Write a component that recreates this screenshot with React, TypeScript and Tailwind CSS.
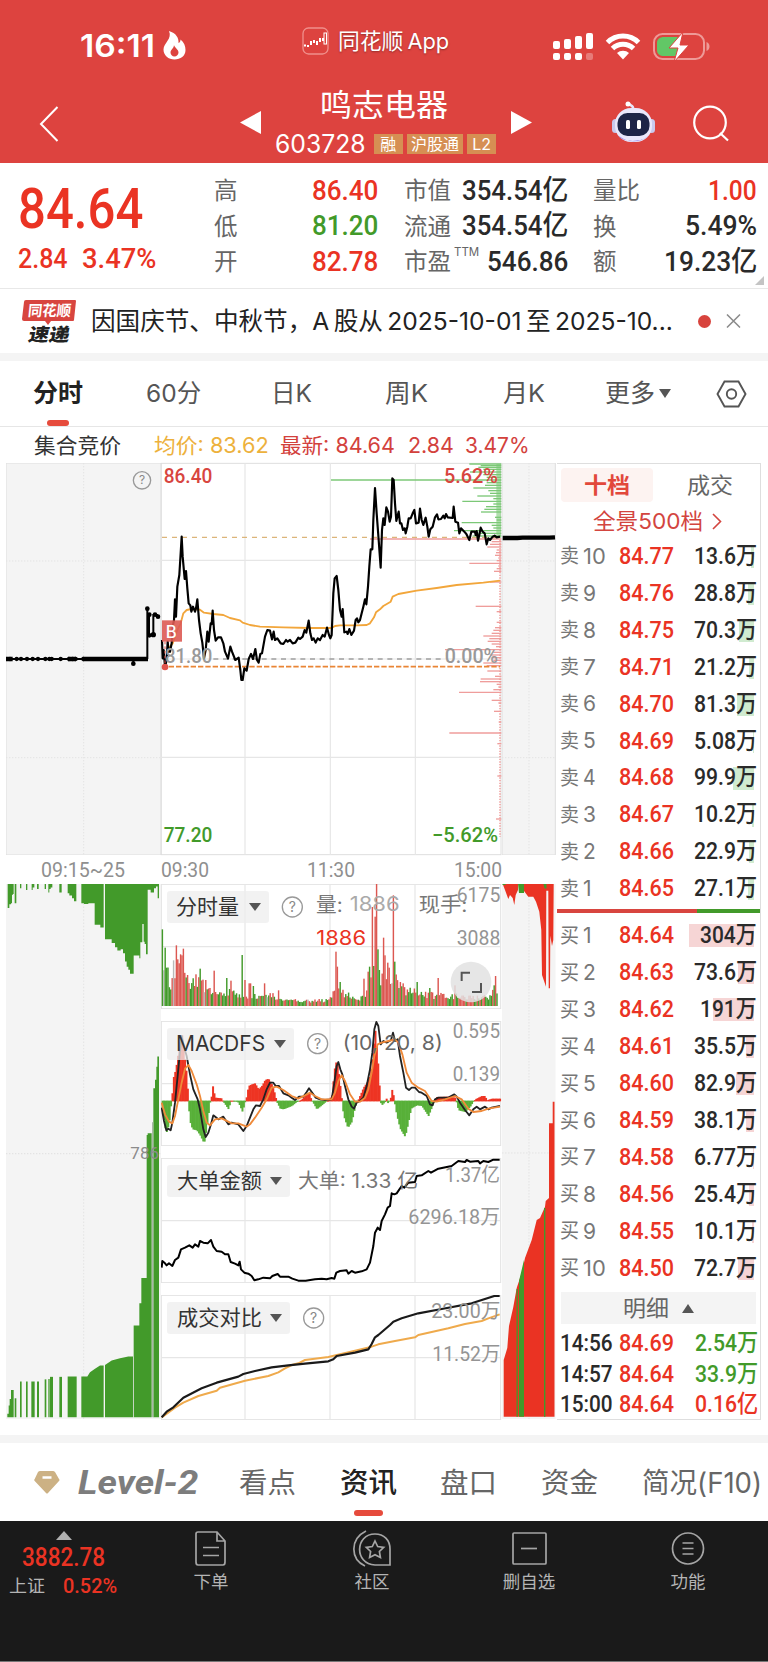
import { useLayoutEffect, useRef, useState, type ReactNode } from "react";

/* Text squeezed or stretched horizontally so that it fills the width of its box. */
function Fit({ className = "", children }: { className?: string; children: ReactNode }) {
  const box = useRef<HTMLSpanElement>(null);
  const inner = useRef<HTMLSpanElement>(null);
  const [scale, setScale] = useState(1);
  useLayoutEffect(() => {
    if (box.current && inner.current && inner.current.offsetWidth > 0) {
      setScale(box.current.clientWidth / inner.current.offsetWidth);
    }
  }, [children]);
  return (
    <span ref={box} className={"block shrink-0 whitespace-nowrap " + className}>
      <span ref={inner} className="inline-block origin-left" style={{ transform: `scaleX(${scale})` }}>
        {children}
      </span>
    </span>
  );
}

type Pt = [number, number];
const parse = (s: string): Pt[] => s.trim().split(/\s+/).map((p) => p.split(",").map(Number) as Pt);
const at = (pts: Pt[], x: number) => {
  for (let i = 1; i < pts.length; i++) {
    if (x <= pts[i][0]) {
      const [x0, y0] = pts[i - 1];
      const [x1, y1] = pts[i];
      return y0 + ((y1 - y0) * (x - x0)) / (x1 - x0 || 1);
    }
  }
  return pts[pts.length - 1][1];
};
const noise = (i: number) => {
  const v = Math.sin(i * 127.1 + 11.7) * 43758.5453;
  return v - Math.floor(v);
};

/* Chart data, in thirds of a pixel */
const PRICE =
  "36,540 38,595 41,570 45,620 50,600 53,545 56,575 60,575 65,550 68,500 72,480 75,418 78,470 82,380 88,345 92,280 95,230 98,290 104,357 108,333 112,385 116,430 121,436 124,455 129,440 135,455 138,445 142,418 147,480 152,520 157,548 162,595 167,570 172,515 176,545 182,490 185,492 188,452 192,510 197,542 204,532 213,532 220,550 225,575 234,596 241,560 246,575 256,600 266,593 271,630 274,660 278,660 283,625 290,632 296,597 303,582 309,597 316,567 321,600 326,608 331,582 336,580 345,530 352,510 360,512 366,538 371,515 375,540 382,535 392,550 400,552 408,540 413,545 420,540 428,550 436,548 445,533 450,537 458,530 464,510 469,518 476,482 481,520 486,540 491,535 497,548 503,535 510,540 518,525 524,530 531,503 537,525 541,535 545,525 550,400 554,355 560,348 565,390 570,450 575,470 578,447 583,517 590,515 593,522 598,507 604,525 612,512 617,480 621,475 625,487 630,480 635,460 640,440 645,418 649,433 654,380 658,320 662,268 667,268 670,180 675,84 680,160 686,240 692,323 696,210 700,175 704,195 709,142 714,155 719,185 723,170 727,55 731,60 735,130 739,183 742,170 746,155 750,190 754,190 759,210 764,205 767,220 772,200 776,175 782,175 788,160 793,150 798,190 806,188 810,146 815,180 820,195 827,173 832,200 836,230 841,208 848,200 855,172 861,163 865,178 873,177 880,167 884,175 888,162 893,172 908,174 911,140 916,185 924,188 928,220 933,205 943,215 949,222 958,240 964,215 975,215 977,225 980,213 984,242 988,225 992,203 998,215 1004,220 1010,253 1015,235 1020,240 1028,230 1034,227 1040,232 1050,230";
const AVERAGE =
  "48,575 68,550 80,515 92,490 100,460 110,450 125,447 150,449 162,458 190,462 220,465 240,474 270,481 278,488 300,495 330,500 400,502 480,504 545,504 555,498 570,496 620,496 650,495 660,490 672,472 678,457 690,448 700,438 722,425 728,410 745,402 800,392 860,384 920,375 1000,368 1050,362";
const ASKS = parse(
  "12,958 17,992 22,985 28,1000 36,960 44,1000 52,1010 60,543 68,1010 76,1005 84,970 92,1015 100,1020 108,982 116,1030 124,937 132,1030 140,1008 148,1003 156,993 172,1035 180,1040 188,935 196,1025 204,1030 212,912 220,985 228,968"
);
const BIDS = parse(
  "237,660 245,1025 253,1020 261,1012 270,1040 278,1038 286,1035 294,1045 302,1040 310,958 318,1045 326,1040 334,1032 366,1020 439,977 455,1040 487,1040 503,1035 511,1030 520,1025 528,1000 536,1018 544,1013 552,1025 560,1038 569,885 577,1030 585,1020 593,1025 601,1030 609,1000 617,1010 633,1012 649,1035 657,992 665,990 673,1040 681,1045 689,1030 697,927 721,1025 729,1045 754,1032 786,1046 819,898 851,1042 948,1042 1077,1038"
);
const VOLUME_SHAPE = parse(
  "20,100 28,130 36,110 45,60 55,110 65,130 80,150 90,130 100,85 130,90 150,60 180,50 220,50 260,38 300,38 350,38 380,20 450,18 520,20 532,45 540,110 550,80 560,45 610,28 625,35 635,60 645,110 655,120 672,100 700,90 725,90 740,55 780,48 830,38 900,34 960,30 1000,30 1020,60 1030,60"
);
const VOLUME_PEAKS: [number, number, string][] = [
  [24, 230, "g"], [32, 175, "g"], [36, 115, "g"], [57, 137, "r"], [62, 182, "r"], [70, 140, "r"], [75, 155, "r"], [79, 152, "r"], [83, 172, "r"], [87, 143, "g"],
  [135, 112, "g"], [151, 78, "r"], [176, 106, "r"], [215, 84, "g"], [228, 76, "r"], [261, 153, "g"], [269, 78, "r"], [284, 68, "r"], [288, 68, "r"], [296, 60, "g"], [328, 68, "r"],
  [370, 47, "r"], [541, 163, "r"], [545, 118, "r"], [549, 85, "r"], [556, 72, "g"], [628, 82, "r"], [641, 103, "r"], [645, 118, "g"], [650, 297, "r"],
  [655, 120, "g"], [659, 268, "r"], [663, 366, "r"], [667, 170, "g"], [672, 108, "g"], [684, 205, "r"], [688, 152, "r"], [697, 130, "r"],
  [701, 115, "r"], [714, 332, "r"], [718, 133, "g"], [735, 72, "r"], [743, 68, "r"], [785, 72, "g"], [823, 54, "g"], [850, 84, "r"], [900, 62, "r"], [1018, 62, "g"], [1022, 90, "r"],
];
const HISTOGRAM = parse(
  "20,700 28,770 34,792 42,765 48,705 50,690 55,625 62,600 68,560 75,530 80,490 85,540 92,590 97,640 99,700 105,760 112,782 125,785 135,800 147,825 155,775 165,700 168,690 173,650 180,685 200,687 205,700 212,710 220,722 228,695 240,697 250,702 262,730 270,700 275,680 280,650 290,645 300,642 310,660 320,650 330,632 340,628 350,645 360,675 365,700 375,720 385,722 410,712 425,700 440,690 455,675 462,670 470,695 485,722 500,710 515,697 530,680 538,600 545,570 552,620 560,690 565,740 578,778 590,760 600,715 610,690 625,655 635,640 645,620 652,570 660,480 668,570 675,680 678,712 690,700 693,680 697,712 700,690 704,700 712,655 718,700 725,740 735,780 750,805 758,770 768,720 785,710 800,712 820,742 835,705 845,683 880,682 900,685 910,725 930,730 945,715 960,690 980,680 990,680 995,693 1010,688 1035,688"
);
const DIF =
  "20,715 27,755 34,783 40,778 47,783 52,760 60,700 68,620 75,545 80,500 86,530 95,560 105,615 115,660 128,690 135,720 145,780 152,803 160,790 168,765 175,738 190,750 205,742 220,765 230,760 250,765 265,785 275,770 285,745 295,720 303,708 315,710 325,690 335,660 345,640 355,640 362,650 372,650 385,672 400,678 410,685 420,692 432,682 445,682 455,668 462,657 475,675 482,685 495,690 510,692 530,690 538,640 545,590 550,578 556,600 562,615 570,650 580,690 590,712 597,718 605,700 615,695 625,685 635,650 645,600 652,550 658,480 664,458 670,470 677,525 685,515 695,520 708,512 714,490 720,515 728,510 735,560 745,610 753,655 762,662 770,655 780,655 792,668 800,670 815,680 825,705 832,708 840,690 850,685 880,685 898,675 905,682 915,700 930,722 943,738 955,720 965,712 975,720 990,712 1000,720 1010,715 1035,710";
const DEA =
  "20,700 30,735 42,757 52,762 60,740 68,700 80,640 90,598 100,587 110,605 125,645 135,680 145,725 155,760 165,768 180,750 200,747 230,762 250,762 275,772 285,765 300,745 320,715 335,690 350,655 365,652 385,662 410,680 430,688 450,678 465,670 480,680 500,690 530,690 540,670 550,635 560,618 570,635 585,675 600,697 615,697 630,685 640,660 650,610 658,560 668,525 680,520 700,515 720,510 730,520 742,555 755,610 770,640 790,655 810,665 830,695 845,697 870,690 900,680 920,690 940,718 955,728 980,725 1000,718 1035,712";
const BIG_ORDERS =
  "20,385 22,365 30,372 35,378 42,372 52,380 60,362 70,355 78,330 90,325 103,318 113,325 120,315 130,322 135,305 145,310 158,312 168,302 175,322 185,335 200,337 210,345 220,345 227,368 240,373 250,378 254,367 258,390 268,400 280,403 290,410 298,423 310,420 325,415 345,417 352,410 368,404 375,412 400,412 412,418 430,424 452,424 480,420 500,418 515,420 530,416 538,418 544,400 555,395 575,393 580,403 590,395 600,400 620,396 635,390 645,370 655,320 660,280 668,265 675,272 680,245 690,225 698,205 705,200 710,162 718,165 725,162 740,140 748,145 760,130 780,128 785,110 800,108 820,95 828,100 850,88 890,80 910,65 930,68 935,62 945,67 970,65 975,72 985,65 1000,68 1015,61 1034,61";
const TODAY =
  "20,832 35,815 55,802 85,773 140,745 185,728 250,710 265,702 300,693 350,682 400,676 450,671 520,664 535,658 545,648 600,638 640,628 650,612 660,592 670,585 705,555 715,545 740,535 790,520 860,507 950,490 1018,468 1034,468";
const YESTERDAY =
  "20,832 60,803 85,788 130,768 185,752 195,743 270,722 340,708 370,697 390,685 410,675 430,670 450,660 520,651 600,632 650,620 670,613 720,603 780,592 790,585 880,565 930,552 980,543 1000,535 1034,523";

const SELLS: [number, string, string, number][] = [
  [10, "84.77", "13.6万", 3], [9, "84.76", "28.8万", 6], [8, "84.75", "70.3万", 15], [7, "84.71", "21.2万", 5], [6, "84.70", "81.3万", 17],
  [5, "84.69", "5.08万", 1], [4, "84.68", "99.9万", 21], [3, "84.67", "10.2万", 2], [2, "84.66", "22.9万", 5], [1, "84.65", "27.1万", 6],
];
const BUYS: [number, string, string, number][] = [
  [1, "84.64", "304万", 65], [2, "84.63", "73.6万", 16], [3, "84.62", "191万", 41], [4, "84.61", "35.5万", 8], [5, "84.60", "82.9万", 18],
  [6, "84.59", "38.1万", 8], [7, "84.58", "6.77万", 1], [8, "84.56", "25.4万", 5], [9, "84.55", "10.1万", 2], [10, "84.50", "72.7万", 16],
];
const NUM = "font-['Roboto','Noto_Sans_CJK_SC',sans-serif] font-medium";

function StatusBar() {
  return (
    <div className="flex h-[86px] items-center pl-[80px]">
      <Fit className="w-[75px] text-[31px] font-semibold leading-[40px] mt-[6px]">16:11</Fit>
      <svg className="ml-[8px] mt-[5px]" width="23" height="29" viewBox="0 0 23 29" fill="none">
        <path d="M6 0c7 2 10 7 9.500 12 1.500-.5 2-2 2-3.500 3.500 2.500 5 6.500 5 10.500 0 6-5 9.500-11 9.500S.5 24.500.5 18.500C.5 12 9.500 8 6 0z" fill="#fff" />
        <path d="M10.500 12.500c2 4-3 5.500-3 9 0 2.300 1.800 4 4 4s4-1.700 4-4c0-3.500-4-4-5-9z" fill="#dd433f" />
      </svg>
      <svg className="ml-[116px] -mt-[5px]" width="27" height="28" viewBox="0 0 27 28" fill="none">
        <rect x="1" y="1" width="25" height="26" rx="5.500" stroke="#f0908c" strokeWidth="1.300" />
        <path d="M2 18.500h2M6 18v2M9 14v4M12 13v3M15 14v4M18 11v4M21 11v3" stroke="#fff" strokeWidth="2" />
        <rect x="22" y="6" width="2.500" height="11" stroke="#fff" strokeWidth="1" />
      </svg>
      <Fit className="ml-[9px] -mt-[4px] w-[111px] text-[22px] leading-[32px] [text-shadow:0_1px_2px_rgba(0,0,0,.35)]">同花顺{"\u2009"}App</Fit>
      <svg className="ml-[103px] mt-[5px]" width="160" height="28" viewBox="552 31 160 28" fill="none">
        <g fill="#fff">
          <rect x="553" y="40" width="7" height="8" rx="2" /><rect x="564" y="38" width="7" height="10" rx="2" />
          <rect x="575" y="35" width="7" height="13" rx="2" /><rect x="586" y="32" width="7" height="16" rx="2" />
          <rect x="553" y="52" width="7" height="7" rx="2" /><rect x="564" y="52" width="7" height="7" rx="2" /><rect x="575" y="52" width="7" height="7" rx="2" />
          <rect x="586" y="52" width="7" height="7" rx="2" opacity=".3" />
          <path d="M617 52a9 9 0 0 1 12 0l-6 6.500z" />
        </g>
        <path d="M607.500 41.500a22 22 0 0 1 31 0M612.500 47.500a15 15 0 0 1 21 0" stroke="#fff" strokeWidth="5" />
        <rect x="654" y="33" width="50" height="25" rx="8.500" stroke="#ee9a97" strokeWidth="2" />
        <path d="M664 36h14l-5 10h5l-2 9h-12c-4 0-7-2-7-6v-7c0-4 3-6 7-6z" fill="#62c766" />
        <path d="M706.500 41c4 1 4 8 0 9z" fill="#ee9a97" />
        <path d="M683 31l-14 16h9l-4 14 15-17h-9z" fill="#fff" stroke="#dd433f" strokeWidth="1" />
      </svg>
    </div>
  );
}

function TitleBar() {
  return (
    <div className="flex h-[77px] items-start">
      <svg className="ml-[39px] mt-[20px]" width="20" height="36" viewBox="0 0 20 36" fill="none"><path d="M18.500 1L2 18l16.500 17" stroke="#fff" strokeWidth="2" /></svg>
      <svg className="ml-[181px] mt-[25px]" width="21" height="23" viewBox="0 0 21 23"><path d="M21 0v23L0 11.500z" fill="#fff" /></svg>
      <div className="ml-[14px] flex w-[221px] flex-col items-center">
        <Fit className="-mt-px mr-[4px] w-[128px] text-[31px] leading-[40px]">鸣志电器</Fit>
        <div className="mt-[6px] flex w-full items-center gap-[4px]">
          <Fit className="mr-[4px] w-[91px] text-[25px] leading-[26px]">603728</Fit>
          <span className="flex h-[20px] w-[29px] items-center justify-center bg-[#d68f53] text-[16px]">融</span>
          <span className="flex h-[20px] w-[57px] items-center justify-center bg-[#d68f53] text-[16px]">沪股通</span>
          <span className="flex h-[20px] w-[29px] items-center justify-center bg-[#d68f53] text-[16px]">L2</span>
        </div>
      </div>
      <svg className="ml-[15px] mt-[25px]" width="21" height="23" viewBox="0 0 21 23"><path d="M0 0v23l21-11.500z" fill="#fff" /></svg>
      <svg className="ml-[79px] mt-[15px]" width="46" height="42" viewBox="0 0 46 42">
        <path d="M22 8c1-4-4-3-4-6" stroke="#e8e6fa" strokeWidth="2.500" fill="none" /><circle cx="17" cy="3" r="2.500" fill="#fff" />
        <rect x="1" y="18" width="7" height="14" rx="3.500" fill="#c9c9ee" /><rect x="37" y="18" width="7" height="14" rx="3.500" fill="#c9c9ee" />
        <rect x="4" y="7" width="37" height="34" rx="16" fill="#e9e7fb" /><path d="M8 35c8 7 22 7 29 0-4 6-25 7-29 0z" fill="#7f66e8" />
        <rect x="6.500" y="12" width="32" height="23" rx="10" fill="#1d2447" />
        <rect x="15" y="19" width="4" height="9" rx="1.500" fill="#fff" /><rect x="26" y="19" width="4" height="9" rx="1.500" fill="#fff" />
      </svg>
      <svg className="ml-[35px] mt-[19px]" width="38" height="37" viewBox="0 0 38 37" fill="none"><circle cx="18" cy="17.500" r="15.800" stroke="#fff" strokeWidth="2.200" /><path d="M28 28l8 7.500" stroke="#fff" strokeWidth="2.200" /></svg>
    </div>
  );
}

function Quote() {
  const label = "text-[23.500px] text-[#666]";
  const row = "flex h-[35.500px] items-center";
  return (
    <section className="flex h-[126px] border-b border-[#e8e8e8] pl-[18px] pt-[10px]">
      <div className={"w-[196px] text-[#ea3323] " + NUM}>
        <Fit className="mt-[4px] w-[125px] text-[55px] leading-[64px]">84.64</Fit>
        <div className="mt-[2px] flex gap-[14px] text-[27px] leading-[32px]"><Fit className="w-[50px]">2.84</Fit><Fit className="w-[74px]">3.47%</Fit></div>
      </div>
      <div className="w-[190px]">
        <div className={row}><span className={label}>高</span><Fit className={"ml-auto mr-[26px] w-[66px] text-[28px] text-[#ea3323] " + NUM}>86.40</Fit></div>
        <div className={row}><span className={label}>低</span><Fit className={"ml-auto mr-[26px] w-[66px] text-[28px] text-[#429a2a] " + NUM}>81.20</Fit></div>
        <div className={row}><span className={label}>开</span><Fit className={"ml-auto mr-[26px] w-[66px] text-[28px] text-[#ea3323] " + NUM}>82.78</Fit></div>
      </div>
      <div className="w-[189px] text-[#2a2a2a]">
        <div className={row}><span className={label}>市值</span><Fit className={"ml-auto mr-[25px] w-[106px] text-[28px] " + NUM}>354.54亿</Fit></div>
        <div className={row}><span className={label}>流通</span><Fit className={"ml-auto mr-[25px] w-[106px] text-[28px] " + NUM}>354.54亿</Fit></div>
        <div className={row}><span className={label}>市盈</span><span className="ml-[3px] -mt-[18px] text-[11.500px] text-[#666]">TTM</span><Fit className={"ml-auto mr-[25px] w-[81px] text-[28px] " + NUM}>546.86</Fit></div>
      </div>
      <div className="relative flex-1 text-[#2a2a2a]">
        <div className={row}><span className={label}>量比</span><Fit className={"ml-auto mr-[11px] w-[49px] text-[28px] text-[#ea3323] " + NUM}>1.00</Fit></div>
        <div className={row}><span className={label}>换</span><Fit className={"ml-auto mr-[11px] w-[72px] text-[28px] " + NUM}>5.49%</Fit></div>
        <div className={row}><span className={label}>额</span><Fit className={"ml-auto mr-[11px] w-[93px] text-[28px] " + NUM}>19.23亿</Fit></div>
        <svg className="absolute bottom-[3px] right-[4px]" width="9" height="9"><path d="M9 0v9H0z" fill="#c4c4c4" /></svg>
      </div>
    </section>
  );
}

function Banner() {
  return (
    <section className="flex h-[64px] items-center pl-[22px]">
      <div className="relative mt-[1px] flex w-[54px] flex-col items-center">
        <svg className="absolute left-0 top-0" width="54" height="26" viewBox="0 0 54 26"><path d="M4 0h49q1 0 1 1l-2 19q0 1-1 1H29l-3 4-3-4H2q-2 0-2-2L2 2q0-2 2-2z" fill="#d8453f" /></svg>
        <Fit className="relative mt-[1px] w-[43px] -skew-x-6 text-[15px] font-bold leading-[20px] text-white">同花顺</Fit>
        <Fit className="mt-[4px] w-[41px] -skew-x-12 text-[18px] font-black leading-[19px] text-[#222]">速递</Fit>
      </div>
      <Fit className="ml-[15px] mt-px w-[582px] text-[24.500px] text-[#222]">因国庆节、中秋节，A{"\u2009"}股从{"\u2009"}2025-10-01{"\u2009"}至{"\u2009"}2025-10...</Fit>
      <span className="ml-[25px] size-[13px] rounded-full bg-[#d8433d]" />
      <svg className="ml-[15px]" width="15" height="14" viewBox="0 0 15 14"><path d="M1 .5l13 13M14 .5l-13 13" stroke="#8a8a8a" strokeWidth="1.500" /></svg>
    </section>
  );
}

function PeriodTabs() {
  return (
    <nav className="flex h-[66px] items-center border-b border-[#e6e6e6] pl-[33px] text-[24.500px] text-[#555]">
      <div className="relative font-bold text-[#222]"><Fit className="w-[50px]">分时</Fit><span className="absolute -bottom-[14px] left-[14px] h-[6px] w-[22px] rounded-full bg-[#e64b3c]" /></div>
      <Fit className="ml-[63px] w-[55px]">60分</Fit>
      <Fit className="ml-[70px] w-[41px]">日K</Fit>
      <Fit className="ml-[73px] w-[43px]">周K</Fit>
      <Fit className="ml-[75px] w-[42px]">月K</Fit>
      <Fit className="ml-[60px] w-[50px]">更多</Fit>
      <svg className="ml-[4px]" width="12" height="9"><path d="M0 0h12L6 9z" fill="#555" /></svg>
      <svg className="ml-[45px]" width="31" height="28" viewBox="0 0 31 28" fill="none" stroke="#555" strokeWidth="1.900"><path d="M8.500 1.500h14L29.500 14l-7 12.500h-14L1.500 14z" /><circle cx="15.500" cy="14" r="4.700" /></svg>
    </nav>
  );
}

function Legend() {
  return (
    <div className="flex h-[36px] items-center pl-[34px] pt-px text-[21px]">
      <Fit className="w-[87px] text-[#333]">集合竞价</Fit>
      <Fit className="ml-[33px] w-[115px] text-[#edb13c]">均价: 83.62</Fit>
      <Fit className="ml-[11px] w-[115px] text-[#d3413c]">最新: 84.64</Fit>
      <Fit className="ml-[13px] w-[46px] text-[#d3413c]">2.84</Fit>
      <Fit className="ml-[11px] w-[65px] text-[#d3413c]">3.47%</Fit>
    </div>
  );
}

const DOTS = [30, 50, 63, 81, 98, 114, 136, 148, 155, 182, 207, 218, 227, 250];

function AuctionPrice() {
  return (
    <svg className="block" width="155" height="392" viewBox="18 9 465 1176" fill="none">
      <rect x="18" y="9" width="465" height="1176" fill="#f4f4f4" stroke="#dedede" strokeWidth="3" />
      <path d="M251 9v1176M18 303h465M18 893h465" stroke="#e3e3e3" strokeWidth="3" strokeDasharray="4 5" />
      <circle cx="426" cy="61" r="26" stroke="#999" strokeWidth="4" />
      <text x="426" y="73" textAnchor="middle" fontSize="36" fill="#888">?</text>
      <path d="M20 597h230" stroke="#000" strokeWidth="6" />
      <path d="M248 597h196" stroke="#000" strokeWidth="13" />
      <path d="M400 597v14M442 597V446M447 462v64h13v-61h14" stroke="#000" strokeWidth="6" />
      <path d="M18 597h20M204 597h24" stroke="#000" strokeWidth="13" />
      {DOTS.map((x) => <circle key={x} cx={x} cy={597} r={6.5} fill="#000" />)}
      <g fill="#000">
        <circle cx="400" cy="611" r="7" /><circle cx="442" cy="446" r="7" /><circle cx="448" cy="464" r="7" /><circle cx="448" cy="526" r="7" />
        <circle cx="460" cy="524" r="8" /><circle cx="465" cy="464" r="7" /><circle cx="474" cy="470" r="7" />
      </g>
    </svg>
  );
}

function PriceChart() {
  return (
    <svg className="block overflow-visible" width="341" height="392" viewBox="33 9 1023 1176" fill="none" fontFamily="'Roboto'" fontWeight={500} fontSize="60">
      <rect x="34" y="10" width="1019" height="1174" fill="#fff" stroke="#dedede" strokeWidth="3" />
      <path d="M285 9v1176M541 9v1176M796 9v1176M33 301h1020M33 892h1020M33 597h1020" stroke="#e6e6e6" strokeWidth="3.500" />
      <g stroke="#7cc877" strokeWidth="4">{ASKS.map(([y, x]) => <path key={y} d={`M${x} ${y}H1054`} />)}</g>
      <g stroke="#ef9d9b" strokeWidth="4">{BIDS.map(([y, x]) => <path key={y} d={`M${x} ${y}H1054`} />)}</g>
      <path d="M1050 240V1130" stroke="#ef9d9b" strokeWidth="6" strokeDasharray="4 4" opacity=".75" />
      <path d="M1046 12V233" stroke="#7cc877" strokeWidth="14" opacity=".6" />
      <path d="M36 232H1050" stroke="#dcb57a" strokeWidth="3.500" strokeDasharray="15 15" />
      <path d="M190 597H884" stroke="#a0a0a0" strokeWidth="4" strokeDasharray="15 14" />
      <path d="M56 620H1050" stroke="#e98535" strokeWidth="5" strokeDasharray="16 6" />
      <polyline points={AVERAGE} stroke="#f2a63b" strokeWidth="5.500" strokeLinejoin="round" />
      <polyline points={PRICE} stroke="#000" strokeWidth="6.500" strokeLinejoin="round" />
      <text x="41" y="69" fill="#d8453f" textLength="146" lengthAdjust="spacingAndGlyphs">86.40</text>
      <text x="882" y="69" fill="#d8453f" textLength="162" lengthAdjust="spacingAndGlyphs">5.62%</text>
      <text x="45" y="608" fill="#999" textLength="142" lengthAdjust="spacingAndGlyphs">81.80</text>
      <text x="884" y="608" fill="#999" textLength="160" lengthAdjust="spacingAndGlyphs">0.00%</text>
      <text x="41" y="1145" fill="#429a2a" textLength="146" lengthAdjust="spacingAndGlyphs">77.20</text>
      <text x="846" y="1145" fill="#429a2a" textLength="198" lengthAdjust="spacingAndGlyphs">−5.62%</text>
      <path d="M45 545v75" stroke="#e0524b" strokeWidth="3" strokeDasharray="8 6" />
      <rect x="36" y="481" width="60" height="64" fill="#dd5a53" fillOpacity=".9" />
      <text x="64" y="533" fill="#fff" fontFamily="'Inter'" fontSize="50" textAnchor="middle">B</text>
      <circle cx="45" cy="621" r="10" fill="#e0524b" />
    </svg>
  );
}

function AfterPrice() {
  return (
    <svg className="block" width="54" height="392" viewBox="1056 9 162 1176" fill="none">
      <rect x="1056" y="9" width="160" height="1176" fill="#f4f4f4" stroke="#dedede" strokeWidth="3" />
      <path d="M1137 9v1176M1056 303h160M1056 893h160" stroke="#e3e3e3" strokeWidth="3" strokeDasharray="4 5" />
      <path d="M1058 234h44l16-1h80l17-1" stroke="#000" strokeWidth="13" />
    </svg>
  );
}

function AuctionVolume() {
  const narrow: [number, number, number][] = [[44, 5, 1478], [60, 5, 1431], [78, 5, 1431], [94, 10, 1431], [111, 6, 1431], [134, 5, 1425], [145, 4, 1424], [150, 9, 1418], [178, 8, 1418], [203, 27, 1417]];
  return (
    <svg className="block" width="155" height="535" viewBox="18 38 465 1498" preserveAspectRatio="none" fill="none">
      <rect x="18" y="38" width="465" height="1498" fill="#f4f4f4" />
      <path d="M251 38v1498M18 793h465" stroke="#e3e3e3" strokeWidth="3" strokeDasharray="4 5" />
      <g fill="#429a2a">
        <path d="M23 38V105H28V95H33V92H36V68H39V66H41V38zM44 38V92H49V38zM60 38V50H64V38zM78 38V55H82V38zM95 38V55H98V48H103V38zM111 38V52H116V38zM134 38V52H138V38zM145 38V62H148V52H152V48H157V38zM178 38V62H185V38zM203 38V64H208V70H216V78H222V86H229V38zM244 38V92H252V94H265V92H284V152H301V160H311V38zM315 38V193H335V203H345V215H352V224H362V221H369V232H375V255H380V270H385V278H390V289H401V238H418V246H421V201H427V150H431V200H434V206H438V235H443V54H452V62H462V50H468V45H473V78H477V38z" />
        <path d="M22 1531V1521H26V1498H29V1480H33V1455H41V1531z" />
        {narrow.map(([x, w, y]) => <rect key={x} x={x} y={y} width={w} height={1531 - y} />)}
        <path d="M244 1531V1417H262L270 1405L285 1395L300 1386H311V1531zM315 1531V1385L335 1372L360 1366L385 1361H399V1531zM401 1531V1274H418V1212H424V1141H440V741H443V736H455V1531zM460 1531V610H465V586H469V550H472V521H477V1531z" />
        <rect x="456" y="705" width="4" height="826" fill="#a9b8a6" /><rect x="399" y="1361" width="2" height="170" fill="#c9d5c6" />
      </g>
      <text x="391" y="808" fontFamily="'Roboto'" fontSize="46" fill="#8b8b8b" textLength="86" lengthAdjust="spacingAndGlyphs">786</text>
    </svg>
  );
}

function AfterVolume() {
  return (
    <svg className="block" width="54" height="535" viewBox="502 884 54 535" fill="none">
      <rect x="502" y="884" width="53.500" height="535" fill="#f4f4f4" />
      <path d="M529 884v535M502 1153h54" stroke="#e3e3e3" strokeDasharray="1.500 1.500" />
      <path d="M502.700 884L505 890l3.300 9 1.700-4 2.700 3 1.600 7 1.400-10 2.300-5V884zM524 884v7l4.300 5.700h5l2.700 5 3.300 10 2 18.300.7 45 2.300 6.700 1.700 5 .3-96h2l.4 97.600h1.300l.3-52.600 1.700 10.300 1.300-6 .4-57z" fill="#ea3323" />
      <path d="M503.700 1416.700V1360l3.600-12 1.700-22 4.300-19 3.400-19 5-15 3.300-15 6.700-18 5-20 3.300-2 5-11.300.7-5.700 3.300-3v-74.700h3.700v-21.600h1.800v315z" fill="#ea3323" />
      <path d="M502.500 884h3v1h-3zM518 884h6v9h-5zM543.500 884h3v4.500h-2zM516.500 1289h1.300v127.700h-1.300zM519 1281l5-21v156.700h-5zM544 1208h1.400v208.700H544z" fill="#429a2a" />
    </svg>
  );
}

function Chip({ label, width, textWidth }: { label: string; width: string; textWidth: string }) {
  return (
    <button className={"absolute left-[6px] top-[7px] flex h-[32px] items-center rounded-[3px] bg-[#ededed]/75 pl-[9px] text-[21px] text-[#333] " + width}>
      <Fit className={textWidth}>{label}</Fit>
      <svg className="ml-auto mr-[8px]" width="12" height="8"><path d="M0 0h12L6 8z" fill="#555" /></svg>
    </button>
  );
}

function Panel({ y, chip, children, over }: { y: number; chip: ReactNode; children: ReactNode; over?: ReactNode }) {
  return (
    <div className="relative h-[125px]">
      <svg className="block" width="341" height="125" viewBox={`18 ${y} 1023 375`} fill="none">
        <rect x="19" y={y + 1} width="1018" height="373" fill="#fff" stroke="#e2e2e2" strokeWidth="3" />
        <path d={`M270 ${y}v375M525 ${y}v375M780 ${y}v375M18 ${y + 188}h1020`} stroke="#e6e6e6" strokeWidth="3.500" />
        {children}
      </svg>
      {chip}
      <svg className="pointer-events-none absolute inset-0 overflow-visible" width="341" height="125" viewBox={`18 ${y} 1023 375`} fill="none" fontFamily="'Roboto','Noto Sans CJK SC'" fontSize="60">
        {over}
      </svg>
    </div>
  );
}

function Help({ x, y }: { x: number; y: number }) {
  return (
    <g>
      <circle cx={x} cy={y} r="30" stroke="#999" strokeWidth="4" />
      <text x={x} y={y + 15} textAnchor="middle" fontFamily="'Inter'" fontSize="42" fill="#888">?</text>
    </g>
  );
}

function Label({ x, y, w, fill = "#949494", inter = false, children }: { x: number; y: number; w: number; fill?: string; inter?: boolean; children: string }) {
  return (
    <text x={x} y={y} fill={fill} textLength={w} lengthAdjust="spacingAndGlyphs" fontFamily={inter ? "'Inter','Noto Sans CJK SC'" : undefined}>{children}</text>
  );
}

function VolumePanel() {
  const bars = Array.from({ length: 240 }, (_, i) => {
    const x = 20 + i * 4.2;
    const peak = VOLUME_PEAKS.find(([px]) => Math.abs(px - x - 2) < 2.1);
    const tone = noise(i * 3 + 5);
    return {
      x,
      h: peak ? peak[1] : at(VOLUME_SHAPE, x) * (0.55 + 0.55 * noise(i)),
      fill: (peak ? peak[2] === "g" : tone < 0.48) ? "#429a2a" : tone > 0.96 ? "#b9b9b9" : "#dc5751",
    };
  });
  return (
    <Panel
      y={43}
      chip={<Chip label="分时量" width="w-[102px]" textWidth="w-[63px]" />}
      over={
        <>
          <Help x={412} y={112} />
          <Label x={483} y={126} w={80} fill="#777" inter>量:</Label>
          <Label x={584} y={124} w={150} fill="#aaa" inter>1886</Label>
          <Label x={791} y={126} w={146} fill="#777" inter>现手:</Label>
          <Label x={905} y={97} w={131}>6175</Label>
          <Label x={905} y={225} w={131}>3088</Label>
          <Label x={484} y={227} w={149} fill="#ea3323" inter>1886</Label>
          <circle cx="948" cy="337" r="61" fill="#e2e2e2" fillOpacity=".85" />
          <path d="M920 334v-25h25M951 367h27v-27" stroke="#555" strokeWidth="6" />
        </>
      }
    >
      {bars.map((b) => <rect key={b.x} x={b.x} y={409 - b.h} width={4.3} height={b.h} fill={b.fill} />)}
    </Panel>
  );
}

function MacdPanel() {
  const bars = Array.from({ length: 242 }, (_, i) => {
    const x = 20 + i * 4.2;
    return { x, v: at(HISTOGRAM, x + 2) };
  });
  return (
    <Panel
      y={455}
      chip={<Chip label="MACDFS" width="w-[127px]" textWidth="w-[89px]" />}
      over={
        <>
          <Help x={488} y={523} />
          <Label x={563} y={543} w={300} fill="#666" inter>(10, 20, 8)</Label>
          <Label x={893} y={507} w={142}>0.595</Label>
          <Label x={893} y={636} w={142}>0.139</Label>
        </>
      }
    >
      {bars.map(({ x, v }) => (
        <rect key={x} x={x} y={Math.min(v, 694)} width={6} height={Math.max(3, Math.abs(v - 696))} fill={v < 696 ? "#ee3423" : "#58b039"} />
      ))}
      <polyline points={DIF} stroke="#222" strokeWidth="5.500" strokeLinejoin="round" />
      <polyline points={DEA} stroke="#ef8a3a" strokeWidth="5.500" strokeLinejoin="round" />
    </Panel>
  );
}

function BigOrderPanel() {
  return (
    <Panel
      y={56}
      chip={<Chip label="大单金额" width="w-[123px]" textWidth="w-[85px]" />}
      over={
        <>
          <Label x={429} y={145} w={360} fill="#777" inter>大单: 1.33 亿</Label>
          <Label x={870} y={127} w={165}>1.37亿</Label>
          <Label x={760} y={254} w={275}>6296.18万</Label>
        </>
      }
    >
      <polyline points={BIG_ORDERS} stroke="#000" strokeWidth="6" strokeLinejoin="round" />
    </Panel>
  );
}

function ComparePanel() {
  return (
    <Panel
      y={465}
      chip={<Chip label="成交对比" width="w-[123px]" textWidth="w-[85px]" />}
      over={
        <>
          <Help x={476} y={534} />
          <Label x={829} y={534} w={207}>23.00万</Label>
          <Label x={832} y={663} w={204}>11.52万</Label>
        </>
      }
    >
      <polyline points={YESTERDAY} stroke="#efaa4c" strokeWidth="6" strokeLinejoin="round" />
      <polyline points={TODAY} stroke="#1a1a1a" strokeWidth="6.500" strokeLinejoin="round" />
    </Panel>
  );
}

function Charts() {
  const axis = "flex h-[29px] items-center pt-px text-[20.500px] text-[#8f8f8f] font-['Roboto']";
  return (
    <div className="flex w-[551px] shrink-0">
      <div className="w-[155px]">
        <AuctionPrice />
        <div className={axis + " pl-[35px]"}><Fit className="w-[84px]">09:15~25</Fit></div>
        <AuctionVolume />
      </div>
      <div className="w-[341px]">
        <PriceChart />
        <div className={axis}><Fit className="w-[48px]">09:30</Fit><Fit className="ml-[98px] w-[48px]">11:30</Fit><Fit className="ml-auto w-[48px]">15:00</Fit></div>
        <div className="flex flex-col gap-[12px]">
          <VolumePanel />
          <MacdPanel />
          <BigOrderPanel />
          <ComparePanel />
        </div>
      </div>
      <div className="w-[54px]">
        <AfterPrice />
        <div className={axis} />
        <AfterVolume />
      </div>
    </div>
  );
}

function Level({ side, row, tone }: { side: string; row: [number, string, string, number]; tone: string }) {
  const [n, price, amount, bar] = row;
  const wide = amount.length === 5 ? "w-[63px]" : "w-[57px]";
  const digits = n === 10 ? "w-[23px]" : n === 1 ? "w-[9px]" : "w-[13px]";
  return (
    <div className="relative flex h-[36.950px] items-center pl-[3px]">
      <span className={"absolute right-[6px] h-[23px] " + tone} style={{ width: bar }} />
      <Fit className="w-[19px] text-[20px] text-[#777]">{side}</Fit>
      <Fit className={"ml-[4px] text-[21px] text-[#777] " + digits}>{String(n)}</Fit>
      <Fit className={"absolute left-[62px] w-[55px] text-[23.500px] text-[#ea3323] " + NUM}>{price}</Fit>
      <Fit className={"relative ml-auto mr-[3px] text-[23.500px] text-[#2a2a2a] " + wide + " " + NUM}>{amount}</Fit>
    </div>
  );
}

function OrderBook() {
  const trades = [["14:56", "84.69", "2.54万", "text-[#429a2a]"], ["14:57", "84.64", "33.9万", "text-[#429a2a]"], ["15:00", "84.64", "0.16亿", "text-[#ea3323]"]];
  return (
    <aside className="flex h-[957px] w-[204px] flex-col border-y border-r border-[#dedede] bg-white *:shrink-0">
      <div className="flex items-center pl-[4px] pt-[4px] text-[22px]">
        <span className="flex h-[34px] w-[92px] items-center justify-center rounded-[4px] bg-[#fdf3f1] font-bold text-[#e2483b]"><Fit className="w-[46px]">十档</Fit></span>
        <Fit className="ml-[34px] w-[46px] text-[#666]">成交</Fit>
      </div>
      <div className="flex h-[36px] items-center pl-[36px] pt-[2px] text-[22px] text-[#d3453f]">
        <Fit className="w-[110px]">全景500档</Fit>
        <svg className="ml-[9px]" width="10" height="17" viewBox="0 0 10 17" fill="none"><path d="M1 1l7.500 7.500L1 16" stroke="#d3453f" strokeWidth="1.600" /></svg>
      </div>
      <div>{SELLS.map((r) => <Level key={r[0]} side="卖" row={r} tone="bg-[#d0ebd0]" />)}</div>
      <div className="mb-[4.500px] mt-[1.500px] flex h-[4px]"><span className="w-[140px] bg-[#d8453f]" /><span className="flex-1 bg-[#429a2a]" /></div>
      <div>{BUYS.map((r) => <Level key={r[0]} side="买" row={r} tone="bg-[#f6d5d5]" />)}</div>
      <div className="mx-[4px] mt-[5px] flex h-[32px] items-center justify-center gap-[13px] bg-[#f4f4f4] pt-px text-[22px] text-[#666]"><Fit className="w-[46px]">明细</Fit><svg width="12" height="9"><path d="M0 9h12L6 0z" fill="#555" /></svg></div>
      <div className="mt-[5px]">
        {trades.map(([t, p, a, c]) => (
          <div key={t} className={"flex h-[30.500px] items-center pl-[3px] text-[23.500px] " + NUM}>
            <Fit className="w-[53px] text-[#2a2a2a]">{t}</Fit><Fit className="ml-[6px] w-[55px] text-[#ea3323]">{p}</Fit><Fit className={"ml-auto mr-[2px] w-[63px] " + c}>{a}</Fit>
          </div>
        ))}
      </div>
    </aside>
  );
}

function SectionTabs() {
  return (
    <nav className="flex h-[78px] items-center pl-[34px] text-[28px] text-[#666]">
      <svg width="26" height="23" viewBox="0 0 26 23"><path d="M6 0h13q1 0 2 1l4 7q1 1 0 2L14 22q-1 1-2 0L.7 10q-1-1 0-2L4 1q1-1 2-1z" fill="#ccb184" /><path d="M8.500 6.500h9" stroke="#fff" strokeWidth="2.500" /></svg>
      <Fit className="ml-[18px] w-[120px] font-['Roboto'] text-[34px] font-bold italic text-[#7d7d7d]">Level-2</Fit>
      <Fit className="ml-[41px] mt-px w-[57px]">看点</Fit>
      <div className="relative ml-[44px] mt-px font-medium text-[#222]"><Fit className="w-[57px]">资讯</Fit><span className="absolute -bottom-[12px] left-[14px] h-[6px] w-[29px] rounded-full bg-[#e64b3c]" /></div>
      <Fit className="ml-[43px] mt-px w-[57px]">盘口</Fit>
      <Fit className="ml-[44px] mt-px w-[57px]">资金</Fit>
      <Fit className="ml-[44px] mt-px w-[120px]">简况(F10)</Fit>
    </nav>
  );
}

function BottomNav() {
  const item = "flex flex-col items-center gap-[2px] pt-[9px] text-[17.500px] text-[#b4b4b4]";
  const s = { width: 38, height: 37, viewBox: "0 0 38 37", fill: "none", stroke: "#a5a5a5", strokeWidth: 1.7 };
  return (
    <footer className="flex h-[141px] border-b border-[#777] bg-[#1a1a1a]">
      <div className="flex w-[127px] flex-col items-center text-[#ea3323]">
        <svg className="mt-[10px]" width="16" height="9"><path d="M0 9h16L8 0z" fill="#b0b0b0" /></svg>
        <Fit className={"mt-[2px] w-[83px] text-[25px] leading-[32px] " + NUM}>3882.78</Fit>
        <div className="flex w-full items-center pl-[9px]"><Fit className="w-[36px] text-[17.500px] leading-[24px] text-[#b4b4b4]">上证</Fit><Fit className={"ml-[18px] w-[54px] text-[21px] leading-[24px] " + NUM}>0.52%</Fit></div>
      </div>
      <div className={item + " ml-[43px] w-[82px]"}><svg {...s}><path d="M4 4q0-2 2-2h19l8 9v21q0 3-2 3H6q-2 0-2-3zM25 2v9h8M11 17.500h16M11 25.500h16" /></svg><span>下单</span></div>
      <div className={item + " ml-[79px] w-[82px]"}><svg {...s}><path d="M13 1C-3 9-3 29 12 36M37 35H22c-21-1-20-31 0-31 9 0 15 6 15 15z" /><path d="M22 11l2.700 5.500 6 .8-4.300 4.200 1 6-5.400-2.800-5.400 2.800 1-6-4.300-4.200 6-.8z" /></svg><span>社区</span></div>
      <div className={item + " ml-[75px] w-[82px]"}><svg {...s}><rect x="3" y="3" width="33" height="31" rx="1" /><path d="M11 18.500h16" /></svg><span>删自选</span></div>
      <div className={item + " ml-[77px] w-[82px]"}><svg {...s}><circle cx="19" cy="18.500" r="15.500" /><path d="M13.500 13h11M13.500 18.500h11M13.500 24h11" /></svg><span>功能</span></div>
    </footer>
  );
}

export default function App() {
  return (
    <main className="flex h-[1662px] w-[768px] flex-col overflow-hidden bg-white font-['Inter','Noto_Sans_CJK_SC',sans-serif]">
      <header className="h-[163px] shrink-0 bg-[#dd433f] text-white"><StatusBar /><TitleBar /></header>
      <Quote />
      <Banner />
      <div className="h-[8px] shrink-0 bg-[#f4f4f4]" />
      <PeriodTabs />
      <Legend />
      <div className="flex pl-[6px]"><Charts /><OrderBook /></div>
      <div className="mt-[15px] h-[8px] shrink-0 bg-[#f4f4f4]" />
      <SectionTabs />
      <BottomNav />
    </main>
  );
}
